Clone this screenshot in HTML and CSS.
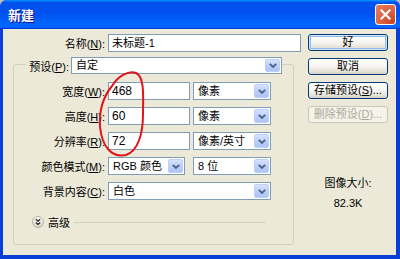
FILE: index.html
```html
<!DOCTYPE html>
<html lang="zh">
<head>
<meta charset="utf-8">
<title>新建</title>
<link rel="stylesheet" href="styles.css">
</head>
<body>
<div class="window">
  <div class="titlebar">
    <span class="title">新建</span>
    <span class="close">
      <svg width="19" height="19" viewBox="0 0 19 19"><path d="M5.5 5.5 L13.5 13.5 M13.5 5.5 L5.5 13.5" stroke="#fff" stroke-width="2.2" stroke-linecap="square"/></svg>
    </span>
  </div>
  <div class="client">
    <div class="main">
      <div class="name-row">
        <span class="name-lbl">名称(<u>N</u>):</span>
        <div class="field name-field">未标题-1</div>
      </div>
      <div class="group">
        <div class="legend">
          <span class="legend-lbl">预设(<u>P</u>):</span>
          <div class="combo preset"><span class="val">自定</span><span class="drop"><svg width="8" height="5" viewBox="0 0 8 5"><path d="M0.8 0.8 L4 4 L7.2 0.8" fill="none" stroke="#4d6185" stroke-width="1.8"/></svg></span></div>
        </div>
        <div class="rows">
          <div class="row">
            <span class="lbl">宽度(<u>W</u>):</span>
            <div class="field num">468</div>
            <div class="combo unit"><span class="val">像素</span><span class="drop"><svg width="8" height="5" viewBox="0 0 8 5"><path d="M0.8 0.8 L4 4 L7.2 0.8" fill="none" stroke="#4d6185" stroke-width="1.8"/></svg></span></div>
          </div>
          <div class="row">
            <span class="lbl">高度(<u>H</u>):</span>
            <div class="field num">60</div>
            <div class="combo unit"><span class="val">像素</span><span class="drop"><svg width="8" height="5" viewBox="0 0 8 5"><path d="M0.8 0.8 L4 4 L7.2 0.8" fill="none" stroke="#4d6185" stroke-width="1.8"/></svg></span></div>
          </div>
          <div class="row">
            <span class="lbl">分辨率(<u>R</u>):</span>
            <div class="field num">72</div>
            <div class="combo unit"><span class="val">像素/英寸</span><span class="drop"><svg width="8" height="5" viewBox="0 0 8 5"><path d="M0.8 0.8 L4 4 L7.2 0.8" fill="none" stroke="#4d6185" stroke-width="1.8"/></svg></span></div>
          </div>
          <div class="row">
            <span class="lbl">颜色模式(<u>M</u>):</span>
            <div class="cell">
              <div class="combo mode"><span class="val">RGB 颜色</span><span class="drop"><svg width="8" height="5" viewBox="0 0 8 5"><path d="M0.8 0.8 L4 4 L7.2 0.8" fill="none" stroke="#4d6185" stroke-width="1.8"/></svg></span></div>
            </div>
            <div class="combo unit"><span class="val">8 位</span><span class="drop"><svg width="8" height="5" viewBox="0 0 8 5"><path d="M0.8 0.8 L4 4 L7.2 0.8" fill="none" stroke="#4d6185" stroke-width="1.8"/></svg></span></div>
          </div>
          <div class="row">
            <span class="lbl">背景内容(<u>C</u>):</span>
            <div class="combo bg"><span class="val">白色</span><span class="drop"><svg width="8" height="5" viewBox="0 0 8 5"><path d="M0.8 0.8 L4 4 L7.2 0.8" fill="none" stroke="#4d6185" stroke-width="1.8"/></svg></span></div>
          </div>
        </div>
        <div class="advanced">
          <span class="adv-icon">
            <svg width="12" height="12" viewBox="0 0 12 12">
              <defs><linearGradient id="g" x1="0" y1="0" x2="0" y2="1"><stop offset="0" stop-color="#ffffff"/><stop offset="1" stop-color="#d6d3c6"/></linearGradient></defs>
              <circle cx="6" cy="6" r="5.5" fill="url(#g)" stroke="#b4b0a0"/>
              <path d="M3.8 3.2 L6 5.2 L8.2 3.2 M3.8 6.4 L6 8.4 L8.2 6.4" fill="none" stroke="#2a2a2a" stroke-width="1.3"/>
            </svg>
          </span>
          <span class="adv-text">高级</span>
          <span class="adv-line"></span>
        </div>
      </div>
    </div>
    <div class="side">
      <div class="btn default">好</div>
      <div class="btn">取消</div>
      <div class="btn">存储预设(<u>S</u>)...</div>
      <div class="btn disabled">删除预设(<u>D</u>)...</div>
      <div class="info">
        <div class="info-title">图像大小:</div>
        <div class="info-val">82.3K</div>
      </div>
    </div>
  </div>
  <svg class="annotation" width="400" height="259" viewBox="0 0 400 259">
    <path d="M112 86 C118 76 129 70 136 73 C145 77 143 98 143 114 C143 134 138 151 126 155 C111 158 102 146 100 127 C99 112 103 97 112 86" fill="none" stroke="#e0141a" stroke-width="2" stroke-linecap="round"/>
  </svg>
</div>
</body>
</html>
```

FILE: styles.css
```css
html, body {
  margin: 0;
  padding: 0;
  background: #bdbdbd;
}

.window {
  position: relative;
  width: 400px;
  height: 259px;
  display: flex;
  flex-direction: column;
  background: #0a3fd6;
  border-radius: 7px 7px 0 0;
  overflow: hidden;
  font: 11px "Liberation Sans", "Noto Sans CJK SC", sans-serif;
  color: #000;
}

.titlebar {
  flex: none;
  height: 29px;
  display: flex;
  align-items: center;
  padding: 0 4px 0 8px;
  background: linear-gradient(180deg, #0997ff, #0053ee 8%, #0050ee 40%, #06f 88%, #06f 93%, #005bff 95%, #003dd7 96%, #003dd7);
}

.title {
  flex: 1;
  color: #fff;
  font: bold 13px "Noto Sans CJK SC", sans-serif;
  text-shadow: 1px 1px #0f1089;
}

.close {
  width: 21px;
  height: 21px;
  box-sizing: border-box;
  border: 1px solid #fff;
  border-radius: 3px;
  background: radial-gradient(circle at 85% 85%, #cc4625 0%, #dc6040 45%, #e5805e 100%);
  display: flex;
  align-items: center;
  justify-content: center;
}

.client {
  flex: 1;
  margin: 0 4px 4px 3px;
  background: #ece9d8;
  display: flex;
  padding-top: 5px;
}

.main {
  width: 298px;
}

.name-row {
  display: flex;
  align-items: center;
  height: 18px;
}

.name-lbl {
  width: 102px;
  margin-right: 3px;
  text-align: right;
  white-space: nowrap;
}

.field {
  height: 18px;
  box-sizing: border-box;
  border: 1px solid #7f9db9;
  background: #fff;
  padding-left: 3px;
  line-height: 16px;
  white-space: nowrap;
}

.name-field {
  width: 193px;
}

.group {
  margin: 12px 0 0 10px;
  width: 281px;
  height: 181px;
  box-sizing: border-box;
  border: 1px solid #d0d0bf;
  border-radius: 3px;
}

.legend {
  display: flex;
  align-items: center;
  margin-top: -8px;
  height: 17px;
}

.legend-lbl {
  margin-left: 12px;
  width: 45px;
  box-sizing: border-box;
  padding-right: 2px;
  text-align: right;
  background: #ece9d8;
  white-space: nowrap;
}

.combo {
  height: 18px;
  box-sizing: border-box;
  border: 1px solid #7f9db9;
  background: #fff;
  display: flex;
  align-items: stretch;
  padding: 1px;
}

.combo .val {
  flex: 1;
  padding-left: 3px;
  line-height: 14px;
  white-space: nowrap;
  overflow: hidden;
}

.drop {
  width: 15px;
  box-sizing: border-box;
  border: 1px solid #bdd0f8;
  border-radius: 2px;
  background: linear-gradient(180deg, #d6e2fd, #b9cdf8 60%, #aec4f6);
  display: flex;
  align-items: center;
  justify-content: center;
}

.preset {
  width: 211px;
  height: 17px;
}

.preset .val {
  line-height: 13px;
}

.rows {
  display: flex;
  flex-direction: column;
  gap: 7px;
  margin-top: 8px;
}

.row {
  display: flex;
  align-items: center;
  height: 18px;
}

.lbl {
  width: 91px;
  margin-right: 3px;
  text-align: right;
  white-space: nowrap;
}

.num {
  width: 82px;
  font-size: 12px;
}

.unit {
  width: 78px;
  margin-left: 3px;
}

.cell {
  width: 82px;
}

.mode {
  width: 77px;
}

.bg {
  width: 163px;
}

.advanced {
  display: flex;
  align-items: center;
  height: 14px;
  margin-top: 15px;
  padding: 0 27px 0 18px;
}

.adv-icon {
  display: flex;
  width: 12px;
  height: 12px;
}

.adv-text {
  margin-left: 4px;
  white-space: nowrap;
}

.adv-line {
  flex: 1;
  height: 1px;
  margin-left: 4px;
  background: #d0d0bf;
}

.side {
  margin-left: 7px;
  width: 80px;
  display: flex;
  flex-direction: column;
}

.btn {
  height: 17px;
  margin-bottom: 7px;
  box-sizing: border-box;
  border: 1px solid #003c74;
  border-radius: 3px;
  background: linear-gradient(180deg, #ffffff, #f4f3ee 55%, #e3e0d6 85%, #d6d0c5);
  text-align: center;
  line-height: 15px;
  white-space: nowrap;
}

.btn.default {
  box-shadow: inset 0 0 0 1px #cee7ff, inset 0 0 0 2px #98b8ea;
}

.btn.disabled {
  border-color: #c9c7ba;
  background: #f5f4ea;
  color: #aca899;
}

.info {
  margin-top: 46px;
  text-align: center;
  line-height: 14px;
}

.info-val {
  margin-top: 6px;
}

.annotation {
  position: absolute;
  left: 0;
  top: 0;
  pointer-events: none;
}
```
